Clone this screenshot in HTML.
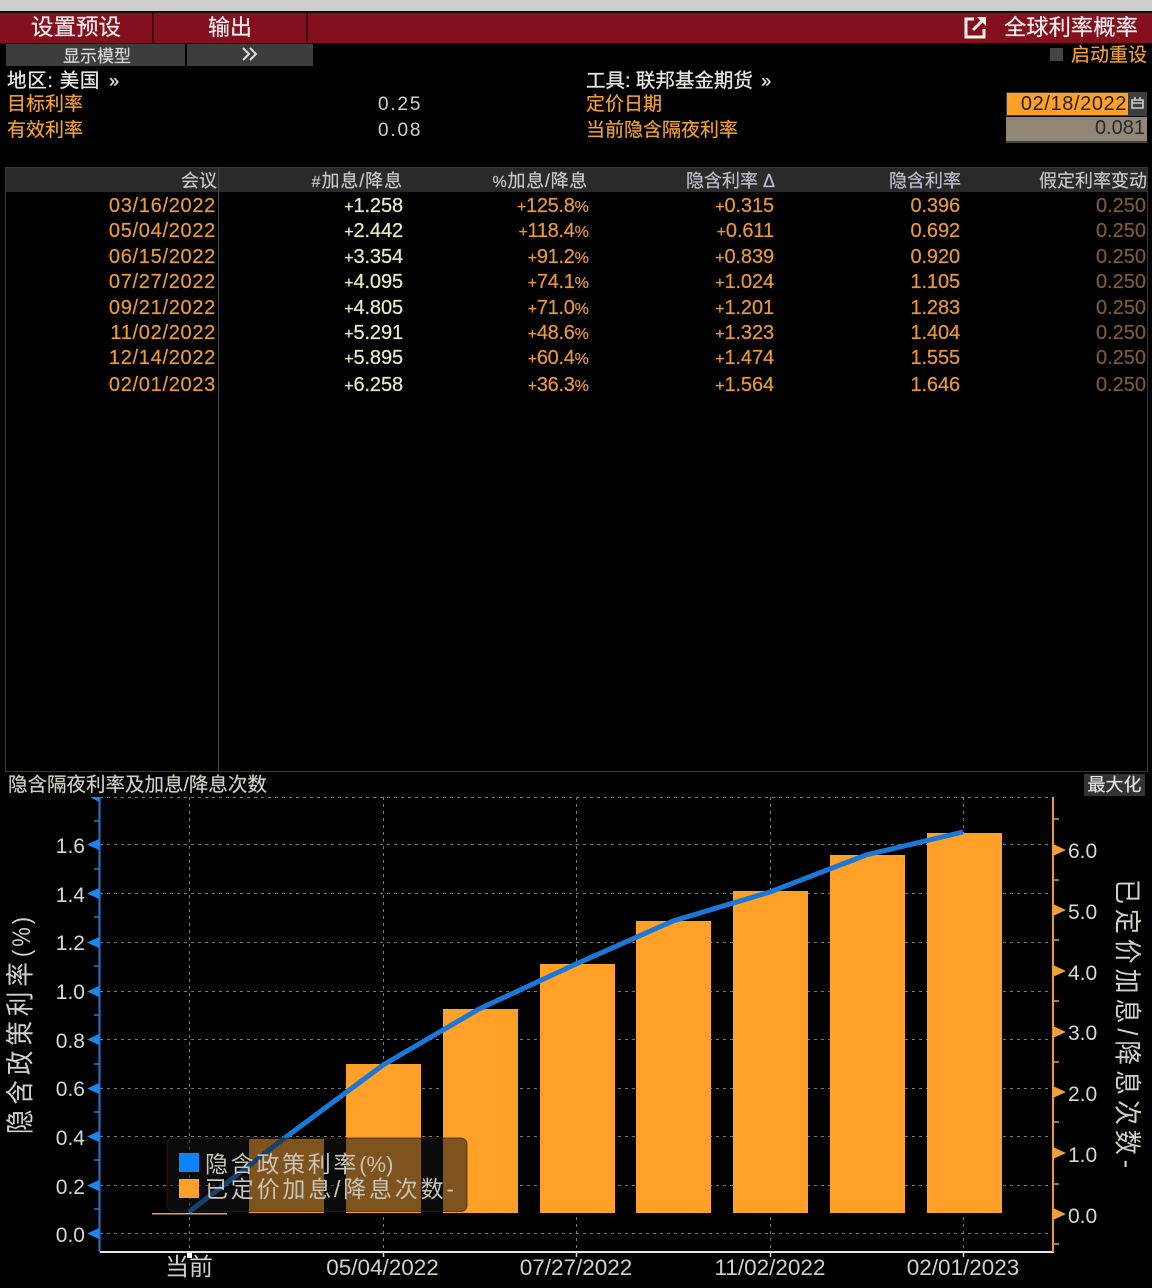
<!DOCTYPE html>
<html lang="zh"><head><meta charset="utf-8"><title>全球利率概率</title>
<style>
html,body{margin:0;padding:0;background:#000}
#p{position:relative;width:1152px;height:1288px;overflow:hidden;background:#000;font-family:"Liberation Sans","Noto Sans CJK SC",sans-serif;filter:blur(.35px)}
.a{position:absolute;white-space:nowrap}
.o{color:#f0a035;font-size:19px;line-height:24px;-webkit-text-stroke:.2px #f0a035}
.w{color:#e8e8e0;font-size:19.500px;line-height:24px;-webkit-text-stroke:.3px #e8e8e0}
.w span{font-size:18px;margin-left:3px}
.hd{color:#c8c8c8;font-size:18px;line-height:22px;top:170px;-webkit-text-stroke:.2px #c8c8c8}
.hd small{font-size:16px}
.r{position:absolute;left:0;width:1152px;height:24px;font-size:20px;line-height:24px}
.r span{position:absolute;white-space:nowrap;-webkit-text-stroke:.2px currentColor}
.r small{font-size:16px;letter-spacing:-.8px}
.r em{font-style:normal;font-size:16px}
.c1{right:936px;color:#e89a3c;letter-spacing:.7px}
.c2{right:749px;color:#e8eec0;letter-spacing:-.1px}
.c3{right:564px;color:#e8983c;letter-spacing:-.3px}
.c4{right:378px;color:#e8983c;letter-spacing:-.1px}
.c5{right:192px;color:#e8983c;letter-spacing:-.1px}
.c6{right:6px;color:#7c5c34}
</style></head><body><div id="p">
<div class="a" style="left:0;top:0;width:1152px;height:11px;background:#cdcdcd"></div>
<div class="a" style="left:0;top:11px;width:1152px;height:2px;background:#111"></div>
<div class="a" style="left:0;top:13px;width:1152px;height:30px;background:#84101e"></div>
<div class="a" style="left:152px;top:13px;width:2px;height:30px;background:#3c0a10"></div>
<div class="a" style="left:306px;top:13px;width:2px;height:30px;background:#3c0a10"></div>
<div class="a" style="left:31px;top:14px;color:#eee;font-size:22.500px;line-height:28px;-webkit-text-stroke:.2px #eee">设置预设</div>
<div class="a" style="left:208px;top:14px;color:#eee;font-size:22px;line-height:28px;-webkit-text-stroke:.2px #eee">输出</div>
<svg class="a" style="left:962px;top:14px" width="28" height="26" viewBox="0 0 28 26"><path d="M12 5H4v18h18v-8" fill="none" stroke="#f2f2f2" stroke-width="3"/><path d="M11 16 21 6" stroke="#f2f2f2" stroke-width="3"/><path d="M15 3h9v9z" fill="#f2f2f2"/></svg>
<div class="a" style="left:1004px;top:14px;color:#eee;font-size:22.300px;line-height:28px;-webkit-text-stroke:.2px #eee">全球利率概率</div>

<div class="a" style="left:6px;top:44px;width:179px;height:22px;background:#3d3d3d"></div>
<div class="a" style="left:187px;top:44px;width:126px;height:22px;background:#3d3d3d"></div>
<div class="a" style="left:63px;top:45px;color:#d5d5d5;font-size:17px;line-height:23px;-webkit-text-stroke:.2px #d5d5d5">显示模型</div>
<svg class="a" style="left:241px;top:47px" width="18" height="15" viewBox="0 0 18 15"><path d="M2 1l6 6-6 6M9 1l6 6-6 6" fill="none" stroke="#ddd" stroke-width="2"/></svg>
<div class="a" style="left:1050px;top:48px;width:13px;height:13px;background:#444"></div>
<div class="a o" style="left:1071px;top:44px">启动重设</div>

<div class="a w" style="left:7px;top:69px;letter-spacing:.7px">地区: 美国 <span>»</span></div>
<div class="a o" style="left:7px;top:93px">目标利率</div>
<div class="a o" style="left:7px;top:119px">有效利率</div>
<div class="a" style="left:378px;top:93px;color:#cfcfcf;font-size:19px;line-height:24px;letter-spacing:1.800px">0.25</div>
<div class="a" style="left:378px;top:119px;color:#cfcfcf;font-size:19px;line-height:24px;letter-spacing:1.800px">0.08</div>
<div class="a w" style="left:586px;top:69px">工具: 联邦基金期货 <span>»</span></div>
<div class="a o" style="left:586px;top:93px">定价日期</div>
<div class="a o" style="left:586px;top:119px">当前隐含隔夜利率</div>

<div class="a" style="left:1006px;top:92px;width:141px;height:24px;background:#3d3d3d"></div>
<div class="a" style="left:1007px;top:93px;width:121px;height:22px;background:#ffa028;color:#222;font-size:20px;line-height:23px;text-align:right;box-sizing:border-box;padding-right:1px;letter-spacing:.6px">02/18/2022</div>
<svg class="a" style="left:1130px;top:95px" width="15" height="16" viewBox="0 0 15 16"><path d="M2 5h11v8H2zM2 8h11M5 2v3M10 2v3" fill="none" stroke="#ccc" stroke-width="1.600"/></svg>
<div class="a" style="left:1006px;top:117px;width:141px;height:26px;background:#8f8676;border-bottom:2px solid #444;box-sizing:border-box;color:#2a2a2a;font-size:20px;line-height:22px;text-align:right;padding-right:2px">0.081</div>

<!-- table -->
<div class="a" style="left:5px;top:167px;width:1141px;height:603px;border:1px solid #383838"></div>
<div class="a" style="left:6px;top:168px;width:1141px;height:24px;background:#2a2a2a"></div>
<div class="a" style="left:218px;top:167px;width:1px;height:604px;background:#484848"></div>
<div class="a hd" style="right:935px">会议</div>
<div class="a hd" style="right:749px;letter-spacing:.9px"><small>#</small>加息/降息</div>
<div class="a hd" style="right:564px;letter-spacing:.7px"><small>%</small>加息/降息</div>
<div class="a hd" style="right:377px;color:#b8bcd0">隐含利率 Δ</div>
<div class="a hd" style="right:191px;color:#b8bcd0">隐含利率</div>
<div class="a hd" style="right:5px">假定利率变动</div>

<div class="r" style="top:194px"><span class="c1">03/16/2022</span><span class="c2"><em>+</em>1.258</span><span class="c3"><em>+</em>125.8<small>%</small></span><span class="c4"><em>+</em>0.315</span><span class="c5">0.396</span><span class="c6">0.250</span></div>
<div class="r" style="top:219px"><span class="c1">05/04/2022</span><span class="c2"><em>+</em>2.442</span><span class="c3"><em>+</em>118.4<small>%</small></span><span class="c4"><em>+</em>0.611</span><span class="c5">0.692</span><span class="c6">0.250</span></div>
<div class="r" style="top:245px"><span class="c1">06/15/2022</span><span class="c2"><em>+</em>3.354</span><span class="c3"><em>+</em>91.2<small>%</small></span><span class="c4"><em>+</em>0.839</span><span class="c5">0.920</span><span class="c6">0.250</span></div>
<div class="r" style="top:270px"><span class="c1">07/27/2022</span><span class="c2"><em>+</em>4.095</span><span class="c3"><em>+</em>74.1<small>%</small></span><span class="c4"><em>+</em>1.024</span><span class="c5">1.105</span><span class="c6">0.250</span></div>
<div class="r" style="top:296px"><span class="c1">09/21/2022</span><span class="c2"><em>+</em>4.805</span><span class="c3"><em>+</em>71.0<small>%</small></span><span class="c4"><em>+</em>1.201</span><span class="c5">1.283</span><span class="c6">0.250</span></div>
<div class="r" style="top:321px"><span class="c1">11/02/2022</span><span class="c2"><em>+</em>5.291</span><span class="c3"><em>+</em>48.6<small>%</small></span><span class="c4"><em>+</em>1.323</span><span class="c5">1.404</span><span class="c6">0.250</span></div>
<div class="r" style="top:346px"><span class="c1">12/14/2022</span><span class="c2"><em>+</em>5.895</span><span class="c3"><em>+</em>60.4<small>%</small></span><span class="c4"><em>+</em>1.474</span><span class="c5">1.555</span><span class="c6">0.250</span></div>
<div class="r" style="top:373px"><span class="c1">02/01/2023</span><span class="c2"><em>+</em>6.258</span><span class="c3"><em>+</em>36.3<small>%</small></span><span class="c4"><em>+</em>1.564</span><span class="c5">1.646</span><span class="c6">0.250</span></div>

<!-- chart header -->
<div class="a" style="left:8px;top:773px;color:#cfcfc4;font-size:19.500px;line-height:25px;-webkit-text-stroke:.2px #cfcfc4">隐含隔夜利率及加息/降息次数</div>
<div class="a" style="left:1084px;top:774px;width:61px;height:22px;background:#333;color:#e4e4e4;font-size:18px;line-height:23px;text-align:center;-webkit-text-stroke:.2px #e4e4e4">最大化</div>

<svg class="a" style="left:0;top:0" width="1152" height="1288" viewBox="0 0 1152 1288">
<g stroke="#777" stroke-width="1" stroke-dasharray="3 4" fill="none">
<path d="M100 797.500H1053M100 844.500H1053M100 893.500H1053M100 942.500H1053M100 991.500H1053M100 1039.500H1053M100 1088.500H1053M100 1136.500H1053M100 1185.500H1053M100 1233.500H1053"/>
<path d="M189.500 797V1252M383.500 797V1252M576.500 797V1252M770.500 797V1252M963.500 797V1252"/>
</g>
<g fill="#ffa028">
<rect x="249" y="1139" width="75" height="74"/><rect x="346" y="1064" width="75" height="149"/><rect x="443" y="1009" width="75" height="204"/><rect x="540" y="964" width="75" height="249"/><rect x="636" y="921" width="75" height="292"/><rect x="733" y="891" width="75" height="322"/><rect x="830" y="855" width="75" height="358"/><rect x="927" y="833" width="75" height="380"/>
</g>
<rect x="152" y="1213" width="75" height="1.500" fill="#e8a060"/>
<polyline points="189,1212 286,1137 383,1065 479,1009 576,964 673,921 770,892 866,855 963,832" fill="none" stroke="#1a78d8" stroke-width="5" stroke-linejoin="round"/>
<!-- left axis -->
<path d="M99.500 797V1252" stroke="#1f78d8" stroke-width="2"/>
<g fill="#1a86f0"><path d="M99 797v5l-9-5zM99 839v11l-12-5.500zM99 888v11l-12-5.500zM99 937v11l-12-5.500zM99 986v11l-12-5.500zM99 1034v11l-12-5.500zM99 1083v11l-12-5.500zM99 1131v11l-12-5.500zM99 1180v11l-12-5.500zM99 1228v11l-12-5.500z"/></g>
<path d="M94 821h6M94 869h6M94 917h6M94 966h6M94 1015h6M94 1064h6M94 1112h6M94 1160h6M94 1209h6" stroke="#1f78d8" stroke-width="1.500"/>
<!-- bottom axis -->
<path d="M100 1252H1054" stroke="#e8e8e8" stroke-width="2"/>
<rect x="187" y="1253" width="5" height="5" fill="#fff"/>
<path d="M383.500 1252v5M576.500 1252v5M770.500 1252v5M963.500 1252v5" stroke="#ddd" stroke-width="1.500"/>
<!-- right axis -->
<path d="M1053 797V1252" stroke="#e89a3c" stroke-width="2"/>
<g fill="#f0a035"><path d="M1053 844v12l13-6zM1053 904v12l13-6zM1053 965v12l13-6zM1053 1026v12l13-6zM1053 1086v12l13-6zM1053 1147v12l13-6zM1053 1208v12l13-6z"/></g>
<path d="M1053 819h6M1053 880h6M1053 940h6M1053 1001h6M1053 1062h6M1053 1122h6M1053 1184h6M1053 1244h6" stroke="#e89a3c" stroke-width="1.500"/>
<!-- legend -->
<rect x="167" y="1138" width="300" height="73.500" rx="6" fill="#141414" fill-opacity=".55" stroke="#3a2408" stroke-opacity=".7"/>
<rect x="179" y="1153" width="20" height="19" fill="#0a84ff"/>
<rect x="179" y="1179" width="20" height="19" fill="#ffa028"/>
<g font-family="'Liberation Sans','Noto Sans CJK SC',sans-serif" fill="#d8d2c4">
<text x="205" y="1172" font-size="23" letter-spacing="2.700" fill="#c8c4b8">隐含政策利率<tspan font-size="22" letter-spacing="0">(%)</tspan></text>
<text x="205" y="1197" font-size="23" letter-spacing="2.800" fill="#c8c4b8">已定价加息/降息次数-</text>
<g font-size="21" text-anchor="end" fill="#d8d8d8">
<text x="85" y="853">1.6</text><text x="85" y="902">1.4</text><text x="85" y="950">1.2</text><text x="85" y="999">1.0</text><text x="85" y="1048">0.8</text><text x="85" y="1096">0.6</text><text x="85" y="1145">0.4</text><text x="85" y="1194">0.2</text><text x="85" y="1242">0.0</text>
</g>
<g font-size="21" fill="#d8d8d8">
<text x="1068" y="858">6.0</text><text x="1068" y="919">5.0</text><text x="1068" y="980">4.0</text><text x="1068" y="1040">3.0</text><text x="1068" y="1101">2.0</text><text x="1068" y="1162">1.0</text><text x="1068" y="1223">0.0</text>
</g>
<g font-size="22.500" text-anchor="middle" fill="#d0d0c8">
<text x="189" y="1275" font-size="24">当前</text><text x="382.500" y="1275">05/04/2022</text><text x="576" y="1275">07/27/2022</text><text x="770" y="1275">11/02/2022</text><text x="963" y="1275">02/01/2023</text>
</g>
<text transform="translate(30,1024) rotate(-90) scale(1,1.150)" font-size="24.500" letter-spacing="5" text-anchor="middle" fill="#d0d0c8">隐含政策利率<tspan font-size="22" letter-spacing="3">(%)</tspan></text>
<text transform="translate(1118,1026) rotate(90) scale(1,1.100)" font-size="25" letter-spacing="4.900" text-anchor="middle" fill="#d0d0c8">已定价加息/降息次数-</text>
</g>
</svg>
</div></body></html>
